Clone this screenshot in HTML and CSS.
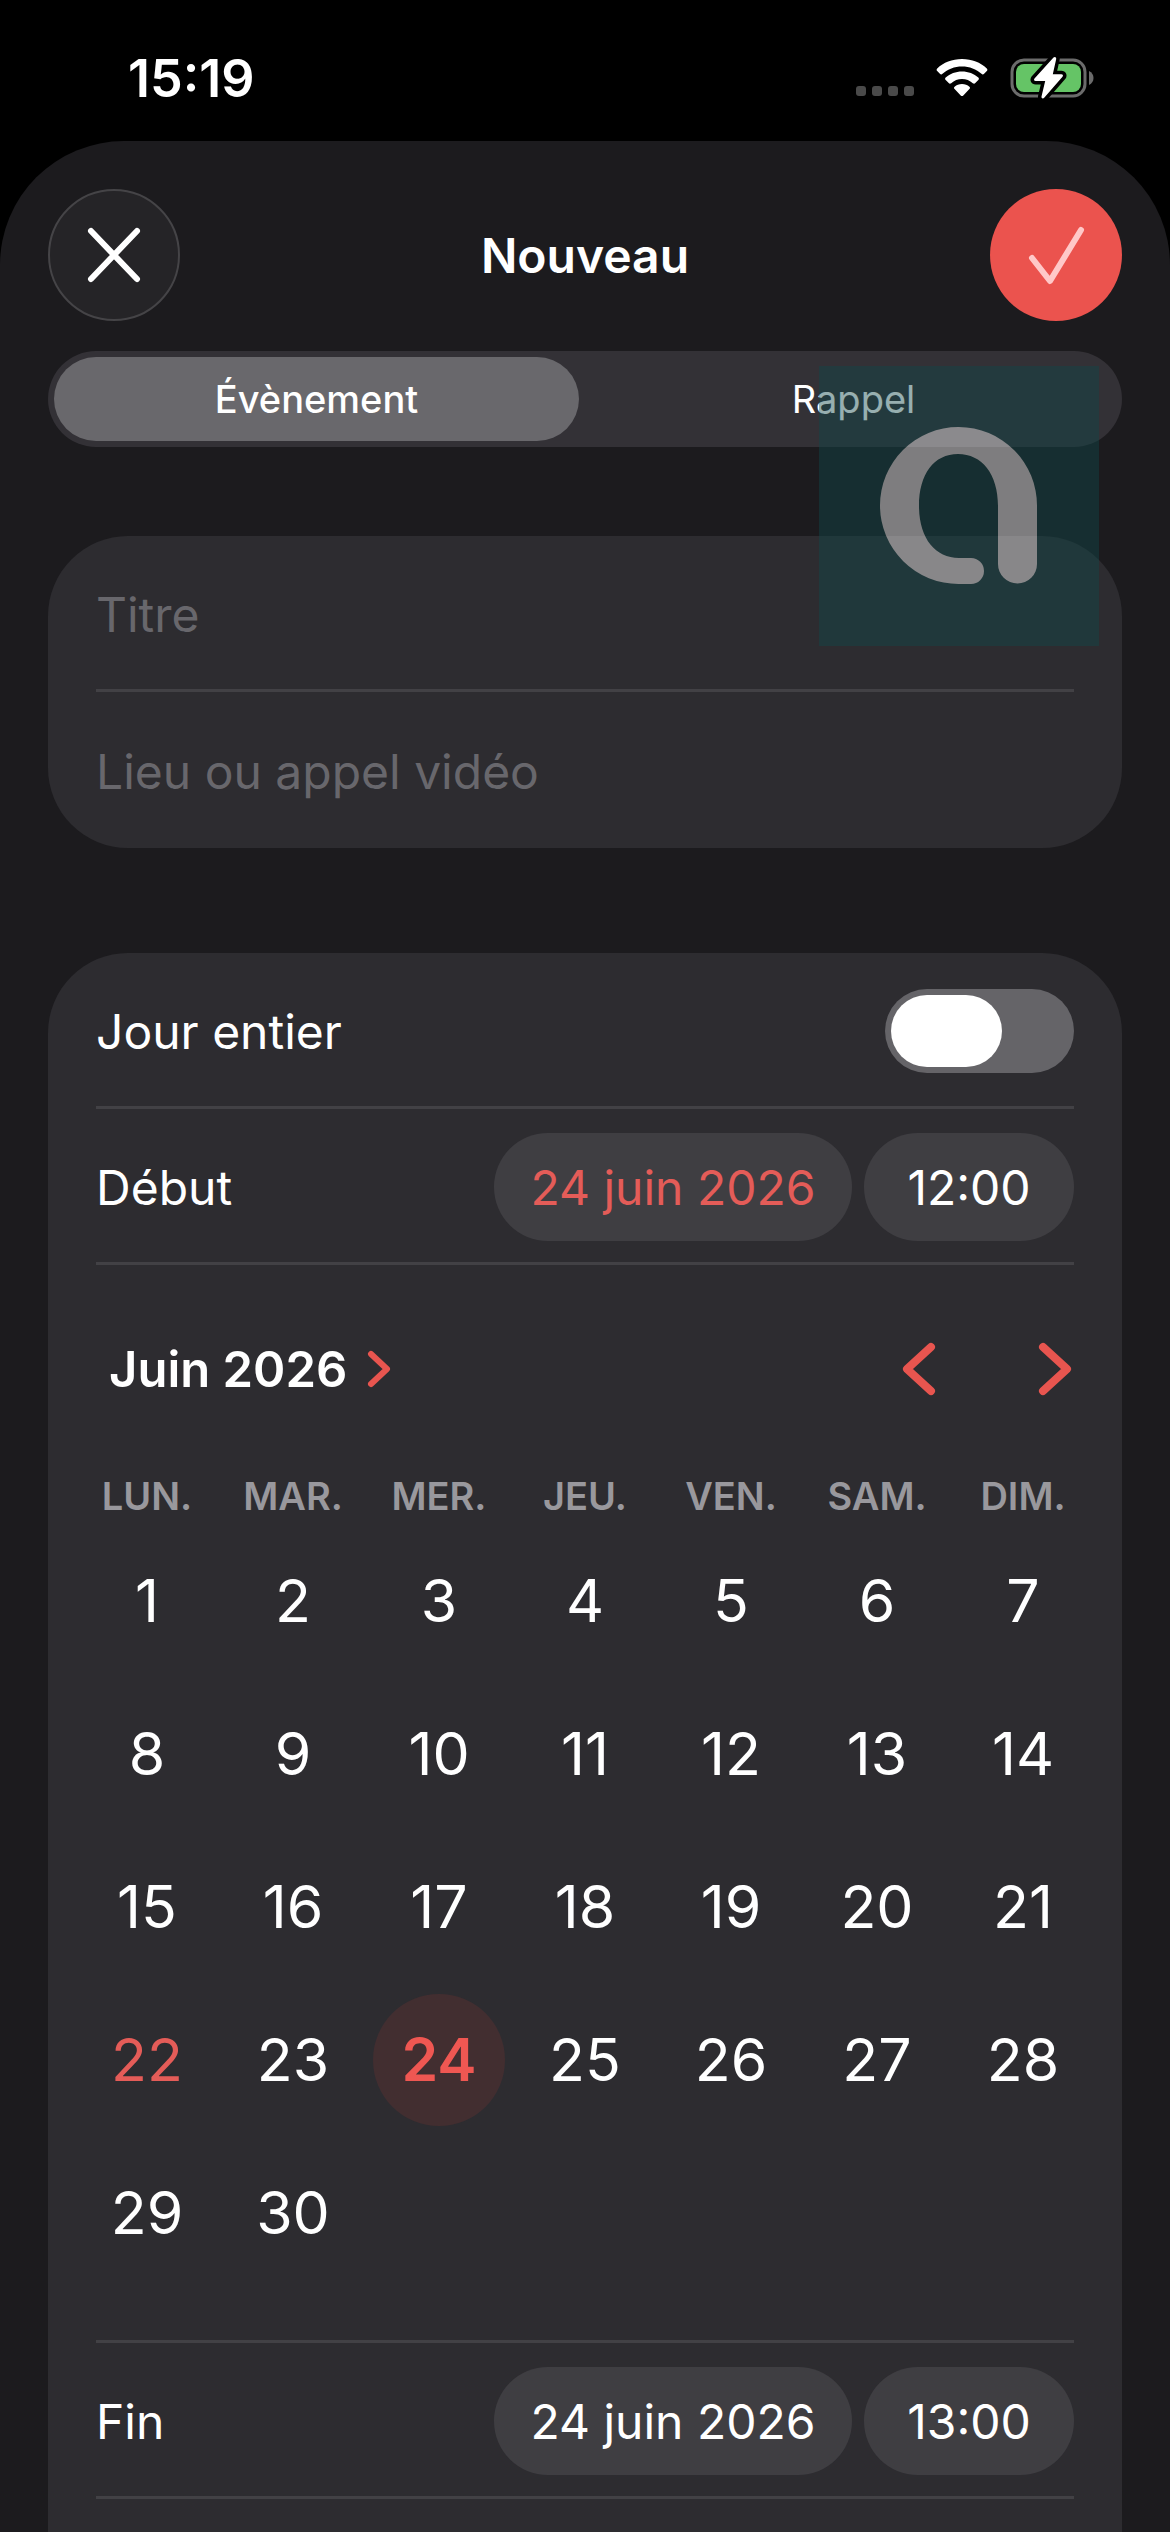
FILE: index.html
```html
<!DOCTYPE html>
<html lang="fr">
<head>
  <title>Nouveau</title>
  <meta charset="UTF-8">
  <meta name="viewport" content="width=device-width, initial-scale=1">
  <link rel="stylesheet" href="styles.css">
</head>
<body>
  <div class="status">
    <span class="clock">15:19</span>
    <div class="status-icons">
      <svg class="dots" width="58" height="40" viewBox="0 0 58 40" fill="#4a4a4a">
        <rect x="0" y="28" width="10" height="10" rx="3"/>
        <rect x="16" y="28" width="10" height="10" rx="3"/>
        <rect x="32" y="28" width="10" height="10" rx="3"/>
        <rect x="48" y="28" width="10" height="10" rx="3"/>
      </svg>
      <svg class="wifi" width="52" height="40" viewBox="0 0 52 40" fill="#fff">
        <path d="M26 1C16 1 7.500 4.500 1.200 10.500c-.8.8-.8 1.800 0 2.600l2.700 2.700c.8.8 1.800.8 2.600 0C11.600 11 18.500 8.400 26 8.400S40.400 11 45.500 15.800c.8.8 1.800.8 2.600 0l2.700-2.700c.8-.8.8-1.800 0-2.600C44.500 4.500 36 1 26 1z"/>
        <path d="M26 13.500c-6.300 0-12 2.300-16.300 6.100-.8.700-.8 1.800 0 2.500l3 3c.7.700 1.700.7 2.500.1C18.100 22.600 21.900 21 26 21s7.900 1.600 10.800 4.200c.8.6 1.800.6 2.500-.1l3-3c.8-.7.8-1.800 0-2.500C38 15.800 32.300 13.500 26 13.500z"/>
        <path d="M26 26c-2.900 0-5.500 1-7.400 2.700-.8.7-.8 1.700 0 2.400l6.100 6.300c.8.800 1.800.8 2.600 0l6.100-6.300c.8-.7.8-1.700 0-2.400C31.500 27 28.900 26 26 26z"/>
      </svg>
      <svg class="battery" width="84" height="44" viewBox="0 0 84 44">
        <rect x="2" y="4" width="73" height="36" rx="12" fill="none" stroke="#6b6b6b" stroke-width="3"/>
        <path d="M79 15c3 1.500 4.500 4 4.500 7s-1.500 5.500-4.500 7z" fill="#6b6b6b"/>
        <rect x="6" y="8" width="65" height="28" rx="8" fill="#65c466"/>
        <path d="M43.500 1.500L24.500 22.500c-1 1.300-.4 2.500 1.200 2.500h9.500L31.500 40.500c-.3 1.800 1.500 2.600 2.700 1.300L52.500 20.800c1-1.300.4-2.500-1.200-2.500h-8.500L46.200 3c.3-1.800-1.500-2.800-2.700-1.500z" fill="#fff" stroke="#000" stroke-width="7" paint-order="stroke"/>
      </svg>
    </div>
  </div>

  <main class="sheet">
    <header class="header">
      <button class="round close" aria-label="Fermer">
        <svg width="54" height="58" viewBox="0 0 54 58" fill="none" stroke="#fff" stroke-width="6" stroke-linecap="round">
          <path d="M4 5l46 48M50 5L4 53"/>
        </svg>
      </button>
      <h1>Nouveau</h1>
      <button class="round confirm" aria-label="Ajouter">
        <svg width="58" height="60" viewBox="0 0 58 60" fill="none" stroke="#ffc8c8" stroke-width="6" stroke-linecap="round" stroke-linejoin="round">
          <path d="M5 33l18 23L54 5"/>
        </svg>
      </button>
    </header>

    <div class="segmented">
      <label><input type="radio" name="type" checked><span>Évènement</span></label>
      <label><input type="radio" name="type"><span>Rappel</span></label>
      <svg class="watermark" viewBox="0 0 280 280">
        <rect width="280" height="280" fill="#10484a"/>
        <path fill="#fff" d="M152 218H140A78.500 78.500 0 1 1 218 140V198a19.500 19.500 0 0 1-39 0V140C179 108 163 88 139 88S100 108 100 140 116 192 140 192H152a13 13 0 0 1 0 26z"/>
      </svg>
    </div>

    <section class="card">
      <div class="row"><input class="text" type="text" placeholder="Titre" aria-label="Titre"></div>
      <div class="row"><input class="text" type="text" placeholder="Lieu ou appel vidéo" aria-label="Lieu ou appel vidéo"></div>
    </section>

    <section class="card dates">
      <div class="row">
        <label for="allday">Jour entier</label>
        <input class="switch" type="checkbox" id="allday">
      </div>
      <div class="row">
        <span>Début</span>
        <button class="pill date active">24 juin 2026</button>
        <button class="pill">12:00</button>
      </div>

      <div class="calendar">
        <div class="month">
          <button class="month-name">Juin 2026
            <svg width="24" height="38" viewBox="0 0 24 38"><path d="M4 4l16 15L4 34"/></svg>
          </button>
          <button class="nav" aria-label="Mois précédent">
            <svg width="34" height="54" viewBox="0 0 34 54"><path d="M29 5L5 27l24 22"/></svg>
          </button>
          <button class="nav" aria-label="Mois suivant">
            <svg width="34" height="54" viewBox="0 0 34 54"><path d="M5 5l24 22L5 49"/></svg>
          </button>
        </div>
        <table>
          <thead>
            <tr><th>LUN.</th><th>MAR.</th><th>MER.</th><th>JEU.</th><th>VEN.</th><th>SAM.</th><th>DIM.</th></tr>
          </thead>
          <tbody>
            <tr><td>1</td><td>2</td><td>3</td><td>4</td><td>5</td><td>6</td><td>7</td></tr>
            <tr><td>8</td><td>9</td><td>10</td><td>11</td><td>12</td><td>13</td><td>14</td></tr>
            <tr><td>15</td><td>16</td><td>17</td><td>18</td><td>19</td><td>20</td><td>21</td></tr>
            <tr><td class="today">22</td><td>23</td><td><span class="selected">24</span></td><td>25</td><td>26</td><td>27</td><td>28</td></tr>
            <tr><td>29</td><td>30</td><td></td><td></td><td></td><td></td><td></td></tr>
          </tbody>
        </table>
      </div>

      <div class="row">
        <span>Fin</span>
        <button class="pill date">24 juin 2026</button>
        <button class="pill">13:00</button>
      </div>
    </section>
  </main>
</body>
</html>
```

FILE: styles.css
```css
* {
  box-sizing: border-box;
}
body {
  margin: 0;
  min-height: 100vh;
  display: flex;
  flex-direction: column;
  background: #000;
  color: #fff;
  font-family: Inter, "Liberation Sans", sans-serif;
  font-size: 48px;
}
button, input {
  font: inherit;
  color: inherit;
}
button {
  border: none;
  padding: 0;
  background: none;
  cursor: pointer;
}
svg {
  display: block;
}

/* status bar */
.status {
  display: flex;
  align-items: center;
  justify-content: space-between;
  height: 141px;
  padding: 15px 76px 0 128px;
}
.clock {
  font-size: 52px;
  font-weight: 600;
}
.status-icons {
  display: flex;
  align-items: center;
  gap: 22px;
}

/* sheet */
.sheet {
  flex: 1;
  display: flex;
  flex-direction: column;
  padding: 48px 48px 0;
  background: #1c1b1e;
  border-radius: 124px 124px 0 0;
}
.header {
  display: flex;
  align-items: center;
  justify-content: space-between;
}
h1 {
  margin: 0;
  font-size: 48px;
  font-weight: 600;
}
.round {
  width: 132px;
  height: 132px;
  border-radius: 50%;
  display: flex;
  align-items: center;
  justify-content: center;
}
.close {
  background: #252427;
  border: 2px solid #454447;
}
.confirm {
  background: #eb534e;
}

.segmented {
  position: relative;
  display: flex;
  gap: 12px;
  margin-top: 30px;
  padding: 6px;
  height: 96px;
  border-radius: 48px;
  background: #333136;
  font-size: 38px;
}
.segmented label {
  flex: 1;
  display: flex;
}
.segmented input {
  position: absolute;
  opacity: 0;
}
.segmented span {
  flex: 1;
  display: flex;
  align-items: center;
  justify-content: center;
  border-radius: 42px;
}
.segmented input:checked + span {
  background: #69686c;
  font-weight: 500;
}
.watermark {
  position: absolute;
  top: 15px;
  right: 23px;
  width: 280px;
  height: 280px;
  opacity: 0.43;
  pointer-events: none;
}

/* form cards */
.card {
  margin-top: 89px;
  padding: 0 48px;
  border-radius: 80px;
  background: #2d2c30;
}
.card.dates {
  flex: 1;
  margin-top: 105px;
  border-radius: 80px 80px 0 0;
}
.row {
  display: flex;
  align-items: center;
  gap: 12px;
  height: 156px;
  padding-top: 3px;
  border-bottom: 3px solid #424145;
}
.card:not(.dates) .row:last-child {
  border-bottom: none;
}
.row label, .row > span {
  flex: 1;
}
.text {
  width: 100%;
  border: none;
  padding: 0;
  outline: none;
  background: none;
}
.text::placeholder {
  color: #68676c;
  opacity: 1;
}
.switch {
  appearance: none;
  width: 189px;
  height: 84px;
  margin: 0;
  padding: 6px;
  border-radius: 42px;
  background: #656468;
}
.switch::before {
  content: "";
  display: block;
  width: 111px;
  height: 72px;
  border-radius: 36px;
  background: #fff;
}
.switch:checked {
  background: #65c466;
}
.switch:checked::before {
  margin-left: auto;
}
.pill {
  min-width: 210px;
  height: 108px;
  border-radius: 54px;
  background: #3f3e42;
}
.pill.date {
  min-width: 358px;
}
.pill.active {
  color: #e45c58;
}

/* calendar */
.calendar {
  margin: 0 -22px;
  padding: 62px 0 51px;
}
.month {
  display: flex;
  align-items: center;
  gap: 102px;
  height: 84px;
  margin-bottom: 57px;
  padding: 0 24px 0 35px;
}
.month svg {
  fill: none;
  stroke: #e8554f;
  stroke-width: 8px;
  stroke-linecap: round;
  stroke-linejoin: round;
}
.month-name {
  display: flex;
  align-items: center;
  gap: 20px;
  margin-right: auto;
  font-size: 49px;
  font-weight: 600;
}
.month .month-name svg {
  stroke-width: 6px;
}
table {
  width: 100%;
  table-layout: fixed;
  border-collapse: collapse;
}
th {
  height: 56px;
  padding: 0;
  color: #99989d;
  font-size: 38px;
  font-weight: 600;
}
td {
  height: 153px;
  padding: 0;
  text-align: center;
  font-size: 59px;
}
.today {
  color: #e45c58;
}
.selected {
  display: flex;
  align-items: center;
  justify-content: center;
  width: 132px;
  height: 132px;
  margin: 0 auto;
  border-radius: 50%;
  background: #422e30;
  color: #ef5752;
  font-weight: 600;
}
.calendar + .row {
  border-top: 3px solid #424145;
  height: 159px;
}
```
